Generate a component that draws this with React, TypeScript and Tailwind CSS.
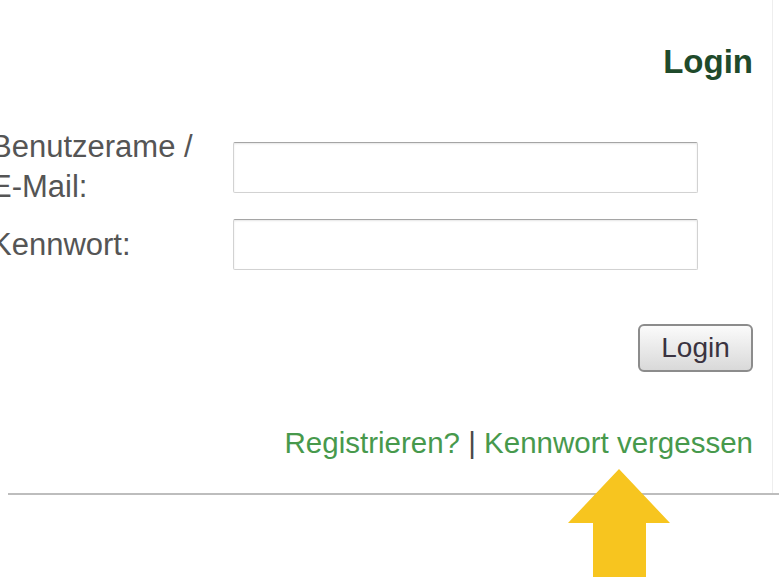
export default function App() {
  return (
    <div
      className="relative h-[577px] w-[779px] overflow-hidden bg-white"
      style={{ fontFamily: '"Liberation Sans", Arial, sans-serif' }}
    >
      <div className="w-[773px] border-r border-[#eeeeee] pb-[34px] pr-[19px] pt-[46px]">
        <h2 className="text-right text-[33px] font-bold leading-8 text-[#1f4a2b]">Login</h2>

        <form className="mt-[49px] grid grid-cols-[233px_465px] items-center gap-y-3">
          <label className="-ml-[9px] text-[31px] leading-[40px] text-[#555555]">
            Benutzerame /
            <br />
            E-Mail:
          </label>
          <input
            type="text"
            className="h-[51px] rounded-[2px] border border-[#d2d2d2] border-t-[#a5a5a5] bg-white shadow-[inset_0_1px_2px_rgba(0,0,0,0.1)] outline-none"
          />
          <label className="-ml-[9px] text-[31px] leading-[40px] text-[#555555]">Kennwort:</label>
          <input
            type="password"
            className="h-[51px] rounded-[2px] border border-[#d2d2d2] border-t-[#a5a5a5] bg-white shadow-[inset_0_1px_2px_rgba(0,0,0,0.1)] outline-none"
          />
        </form>

        <div className="mt-[54px] flex justify-end">
          <button
            type="button"
            className="h-[48px] w-[115px] rounded-[6px] border-2 border-[#8c8c8c] bg-gradient-to-b from-[#fbfbfb] to-[#d9d9d9] text-[28px] leading-none text-[#3a3340]"
          >
            Login
          </button>
        </div>

        <p className="mt-[55px] text-right text-[29.5px] leading-8 text-[#47994c]">
          <a href="#">Registrieren?</a>
          <span className="text-[#4a4a4a]"> | </span>
          <a href="#">Kennwort vergessen</a>
        </p>
      </div>

      <hr className="ml-2 border-t-2 border-[#bdbdbd]" />

      {/* pointer arrow */}
      <svg className="absolute left-[568px] top-[469px]" width="102" height="108" viewBox="0 0 102 108">
        <path d="M51 0 L102 54 L78 54 L78 108 L25 108 L25 54 L0 54 Z" fill="#f7c51f" />
      </svg>
    </div>
  )
}
